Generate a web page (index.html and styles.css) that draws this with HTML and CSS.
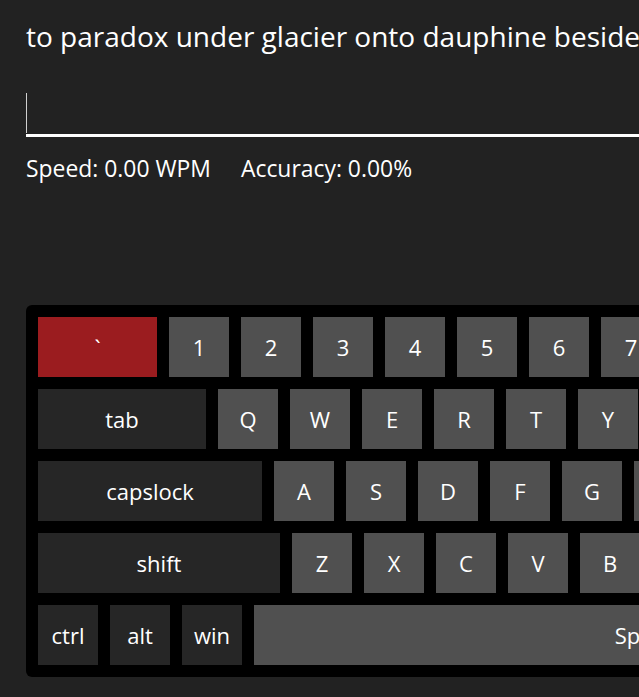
FILE: index.html
```html
<!DOCTYPE html>
<html lang="en">
<head>
<meta charset="utf-8">
<title>Typing Test</title>
<link rel="stylesheet" href="styles.css">
</head>
<body>
<main class="app">
  <p class="prompt">to paradox under glacier onto dauphine beside the river</p>
  <div class="entry"><span class="caret"></span></div>
  <div class="stats">
    <span class="stat">Speed: 0.00 WPM</span>
    <span class="stat">Accuracy: 0.00%</span>
  </div>
  <div class="keyboard">
    <div class="row">
      <div class="key key-active w-backtick">`</div>
      <div class="key">1</div><div class="key">2</div><div class="key">3</div><div class="key">4</div><div class="key">5</div><div class="key">6</div><div class="key">7</div><div class="key">8</div><div class="key">9</div><div class="key">0</div><div class="key">-</div><div class="key">=</div>
      <div class="key key-mod w-back">backspace</div>
    </div>
    <div class="row">
      <div class="key key-mod w-tab">tab</div>
      <div class="key">Q</div><div class="key">W</div><div class="key">E</div><div class="key">R</div><div class="key">T</div><div class="key">Y</div><div class="key">U</div><div class="key">I</div><div class="key">O</div><div class="key">P</div><div class="key">[</div><div class="key">]</div><div class="key">\</div>
    </div>
    <div class="row">
      <div class="key key-mod w-caps">capslock</div>
      <div class="key">A</div><div class="key">S</div><div class="key">D</div><div class="key">F</div><div class="key">G</div><div class="key">H</div><div class="key">J</div><div class="key">K</div><div class="key">L</div><div class="key">;</div><div class="key">'</div>
      <div class="key key-mod w-enter">enter</div>
    </div>
    <div class="row">
      <div class="key key-mod w-shift">shift</div>
      <div class="key">Z</div><div class="key">X</div><div class="key">C</div><div class="key">V</div><div class="key">B</div><div class="key">N</div><div class="key">M</div><div class="key">,</div><div class="key">.</div><div class="key">/</div>
      <div class="key key-mod w-shift">shift</div>
    </div>
    <div class="row">
      <div class="key key-mod">ctrl</div>
      <div class="key key-mod">alt</div>
      <div class="key key-mod">win</div>
      <div class="key w-space">Space</div>
      <div class="key key-mod">win</div>
      <div class="key key-mod">alt</div>
      <div class="key key-mod">ctrl</div>
    </div>
  </div>
</main>
</body>
</html>
```
FILE: styles.css
```css
html, body {
  margin: 0;
  padding: 0;
  background: #222222;
  overflow: hidden;
}

body {
  color: #ffffff;
  font-family: "Open Sans", "Noto Sans", sans-serif;
}

.app {
  padding: 17px 0 0 26px;
  width: max-content;
}

.prompt {
  margin: 0;
  font-size: 28px;
  line-height: 38px;
  white-space: nowrap;
}

.entry {
  margin-top: 38px;
  width: 1200px;
  height: 41px;
  border-bottom: 3px solid #ffffff;
}

.caret {
  display: block;
  width: 1px;
  height: 40px;
  background: #d0d0d0;
}

.stats {
  margin-top: 16px;
  display: flex;
  gap: 30px;
  font-size: 22.9px;
  line-height: 31px;
}

.keyboard {
  margin-top: 121px;
  display: flex;
  flex-direction: column;
  gap: 12px;
  padding: 12px;
  background: #000000;
  border-radius: 6px;
  width: max-content;
}

.row {
  display: flex;
  gap: 12px;
}

.key {
  width: 60px;
  height: 60px;
  flex: none;
  display: flex;
  align-items: center;
  justify-content: center;
  background: #505050;
  font-size: 22px;
  line-height: 1;
  color: #ffffff;
}

.key-mod {
  background: #262626;
}

.key-active {
  background: #9b1c1f;
}

.w-backtick { width: 119px; }
.w-back { width: 150px; }
.w-tab { width: 168px; }
.w-caps { width: 224px; }
.w-enter { width: 166px; }
.w-shift { width: 242px; }
.w-space { width: 782px; }
```
